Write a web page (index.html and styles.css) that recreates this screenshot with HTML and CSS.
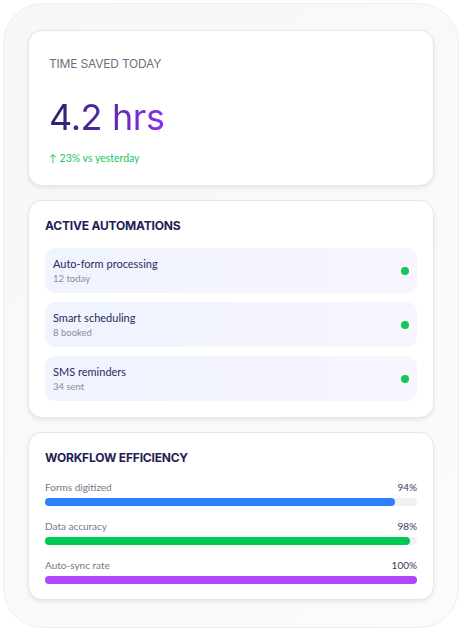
FILE: index.html
```html
<!DOCTYPE html>
<html lang="en">
<head>
    <meta charset="UTF-8">
    <meta name="viewport" content="width=device-width, initial-scale=1.0">
    <title>Practice Dashboard</title>
    <link rel="stylesheet" href="styles.css">
</head>
<body>
    <div class="frame">
        <div class="card hero">
            <div class="hero-label">TIME SAVED TODAY</div>
            <div class="hero-value">4.2 hrs</div>
            <div class="hero-change">↑ 23% vs yesterday</div>
        </div>

        <div class="card">
            <h2>ACTIVE AUTOMATIONS</h2>
            <div class="auto-list">
                <div class="auto-item">
                    <div>
                        <div class="auto-name">Auto-form processing</div>
                        <div class="auto-sub">12 today</div>
                    </div>
                    <span class="dot"></span>
                </div>
                <div class="auto-item">
                    <div>
                        <div class="auto-name">Smart scheduling</div>
                        <div class="auto-sub">8 booked</div>
                    </div>
                    <span class="dot"></span>
                </div>
                <div class="auto-item">
                    <div>
                        <div class="auto-name">SMS reminders</div>
                        <div class="auto-sub">34 sent</div>
                    </div>
                    <span class="dot"></span>
                </div>
            </div>
        </div>

        <div class="card efficiency">
            <h2>WORKFLOW EFFICIENCY</h2>
            <div class="metric">
                <div class="metric-row"><span>Forms digitized</span><span class="pct">94%</span></div>
                <div class="track"><div class="fill blue" style="width: 94%"></div></div>
            </div>
            <div class="metric">
                <div class="metric-row"><span>Data accuracy</span><span class="pct">98%</span></div>
                <div class="track"><div class="fill green" style="width: 98%"></div></div>
            </div>
            <div class="metric">
                <div class="metric-row"><span>Auto-sync rate</span><span class="pct">100%</span></div>
                <div class="track"><div class="fill purple" style="width: 100%"></div></div>
            </div>
        </div>
    </div>
</body>
</html>
```

FILE: styles.css
```css
body {
    margin: 0;
    font-family: 'Lato', sans-serif;
    background: #fff;
}
.frame {
    margin: 3px;
    height: 625px;
    box-sizing: border-box;
    border: 1px solid #eceef2;
    border-radius: 40px;
    background: linear-gradient(135deg, #f6f7f9, #fafbfc);
    padding: 26px 24px;
    display: flex;
    flex-direction: column;
    gap: 14px;
}
.card {
    background: white;
    border: 1px solid #e5e7ec;
    border-radius: 14px;
    box-shadow: 0 2px 4px rgba(0, 0, 0, 0.08);
    padding: 17px 16px 16px;
}
.hero {
    padding: 25px 20px 20px;
    height: 156px;
    box-sizing: border-box;
}
.efficiency {
    padding-bottom: 15px;
}
.hero-label {
    font-family: 'Inter', sans-serif;
    font-size: 12px;
    line-height: 16px;
    letter-spacing: -0.2px;
    color: #6b7080;
}
.hero-value {
    font-family: 'Inter', sans-serif;
    font-size: 36px;
    line-height: 46px;
    letter-spacing: -0.4px;
    margin-top: 22px;
    display: inline-block;
    background: linear-gradient(90deg, #2a2266, #8c2ef2);
    -webkit-background-clip: text;
    background-clip: text;
    color: transparent;
}
.hero-change {
    font-size: 10.5px;
    line-height: 16px;
    margin-top: 10px;
    color: #22c55e;
}
h2 {
    margin: 0;
    font-family: 'Inter', sans-serif;
    font-size: 12px;
    line-height: 16px;
    font-weight: 700;
    letter-spacing: -0.2px;
    color: #1f1d55;
}
.auto-list {
    display: flex;
    flex-direction: column;
    gap: 9px;
    margin-top: 14px;
}
.auto-item {
    display: flex;
    justify-content: space-between;
    align-items: center;
    padding: 8px;
    border-radius: 10px;
    background: linear-gradient(90deg, #eff4fe, #f8f5ff);
}
.auto-name {
    font-size: 11px;
    line-height: 15px;
    color: #2a2a5c;
}
.auto-sub {
    margin-top: 2px;
    font-size: 9.5px;
    line-height: 12px;
    color: #8b8d99;
}
.dot {
    width: 8px;
    height: 8px;
    border-radius: 50%;
    background: #10c95a;
}
.metric {
    margin-top: 12px;
}
h2 + .metric {
    margin-top: 13px;
}
.metric-row {
    display: flex;
    justify-content: space-between;
    font-size: 10px;
    line-height: 16px;
    color: #767988;
}
.pct {
    color: #3a3a5c;
}
.track {
    margin-top: 3px;
    height: 8px;
    border-radius: 4px;
    background: #f0f1f4;
}
.fill {
    height: 100%;
    border-radius: 4px;
}
.blue { background: #2f80ff; }
.green { background: #00c853; }
.purple { background: #ae47fd; }
```
